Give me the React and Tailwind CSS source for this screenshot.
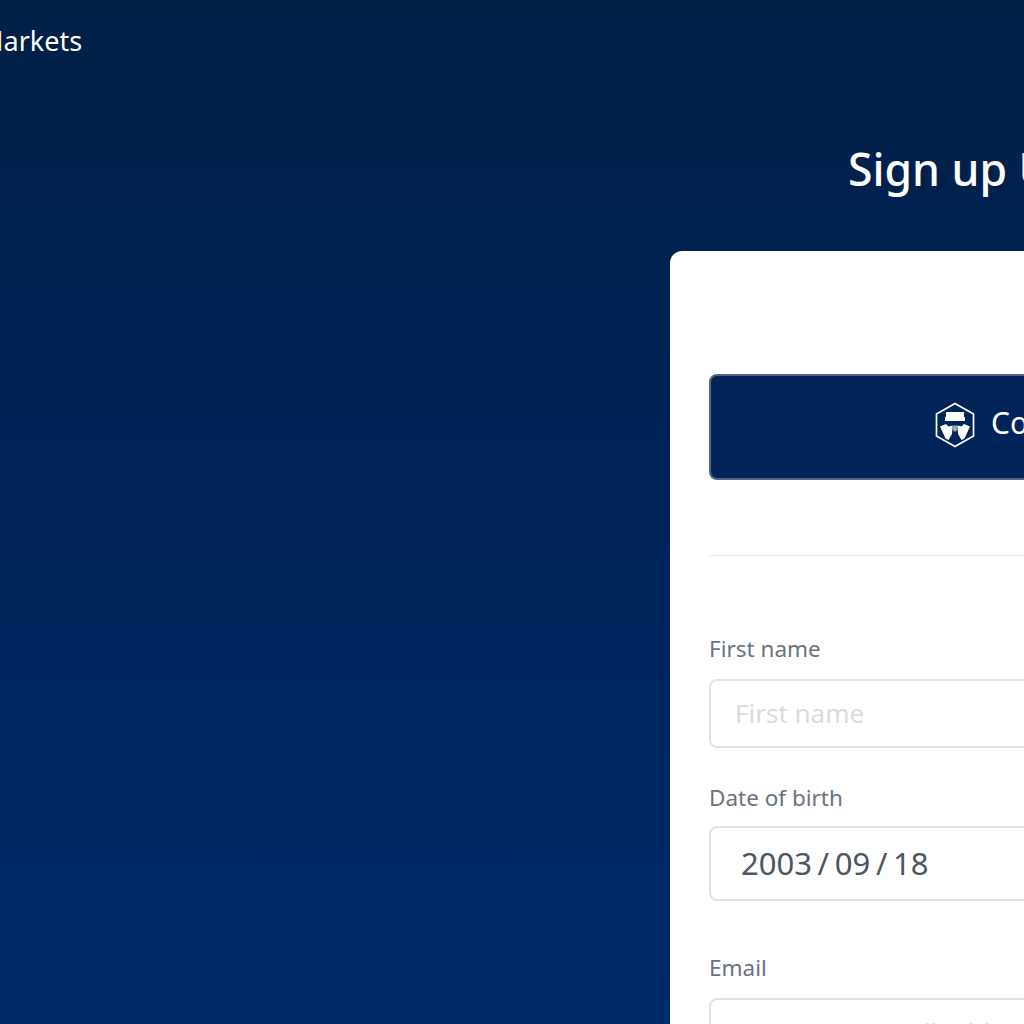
import React from 'react';

function CryptoLogo() {
  return (
    <svg width="40" height="46" viewBox="0 0 40 46" className="shrink-0 mt-[4px]">
      <path d="M20 1.500 L38.500 12 V34 L20 44.500 L1.500 34 V12 Z" fill="none" stroke="#fff" strokeWidth="1.700" />
      <path d="M11 10 H29 V15 H30 V19 H10 V15 H11 Z" fill="#fff" />
      <path d="M5 24.500 L11 22 L13.500 24.500 L17.500 23.500 L17 32 L13.500 38 L10.500 36.500 L7.500 30 Z" fill="#fff" />
      <path d="M35 24.500 L29 22 L26.500 24.500 L22.500 23.500 L23 32 L26.500 38 L29.500 36.500 L32.500 30 Z" fill="#fff" />
      <path d="M17.500 23.500 H22.500 V28 L20 30 L17.500 28 Z" fill="#fff" opacity="0.6" />
    </svg>
  );
}

function Field({ label, placeholder, value, wrapClass, gapClass, boxClass }) {
  return (
    <div className={wrapClass}>
      <label className="block text-[22.5px] leading-[30px] text-[#6b7280]">{label}</label>
      <div className={`flex items-center border-2 border-[#dfe2e7] rounded-lg bg-white ${gapClass} ${boxClass}`}>
        {value ? (
          <span className="pl-[30px] text-[31px] text-[#4b5563] [word-spacing:-2.4px]">{value}</span>
        ) : (
          <span className="text-[26px] text-[#d8dbe0] pl-6">{placeholder}</span>
        )}
      </div>
    </div>
  );
}

export default function App() {
  return (
    <div className="w-[1024px] h-[1024px] overflow-hidden bg-gradient-to-b from-[#002046] via-[#00235a] to-[#002a68] font-['Noto_Sans',sans-serif]">
      {/* NAV */}
      <div className="h-[82px] flex items-center -ml-[21px]">
        <a className="text-[27px] text-white">Markets</a>
      </div>

      {/* CONTENT */}
      <div className="w-[1400px] ml-[670px]">
        <h1 className="ml-[178px] mt-[57px] h-[112px] text-[44.500px] leading-[60px] font-medium text-white whitespace-nowrap">Sign up Using</h1>

        <div className="w-[760px] bg-white rounded-t-xl px-[39px] pt-[123px]">
          <button className="w-full h-[106px] bg-[#01245a] border-2 border-[#56657f] rounded-lg flex items-center justify-start pl-[224px] pb-[9px] gap-[16px]">
            <CryptoLogo />
            <span className="text-[30px] text-white whitespace-nowrap">Continue with Crypto.com</span>
          </button>

          <div className="mt-[75px] border-t border-[#e5e7eb]" />

          <Field label="First name" placeholder="First name" wrapClass="mt-[78px]" gapClass="mt-[15px]" boxClass="h-[69px]" />
          <Field label="Date of birth" value="2003 / 09 / 18" wrapClass="mt-[35px]" gapClass="mt-[13px]" boxClass="h-[75px]" />
          <Field label="Email" placeholder="Enter your email address" wrapClass="mt-[52px]" gapClass="mt-[15px]" boxClass="h-[68px]" />
        </div>
      </div>
    </div>
  );
}
